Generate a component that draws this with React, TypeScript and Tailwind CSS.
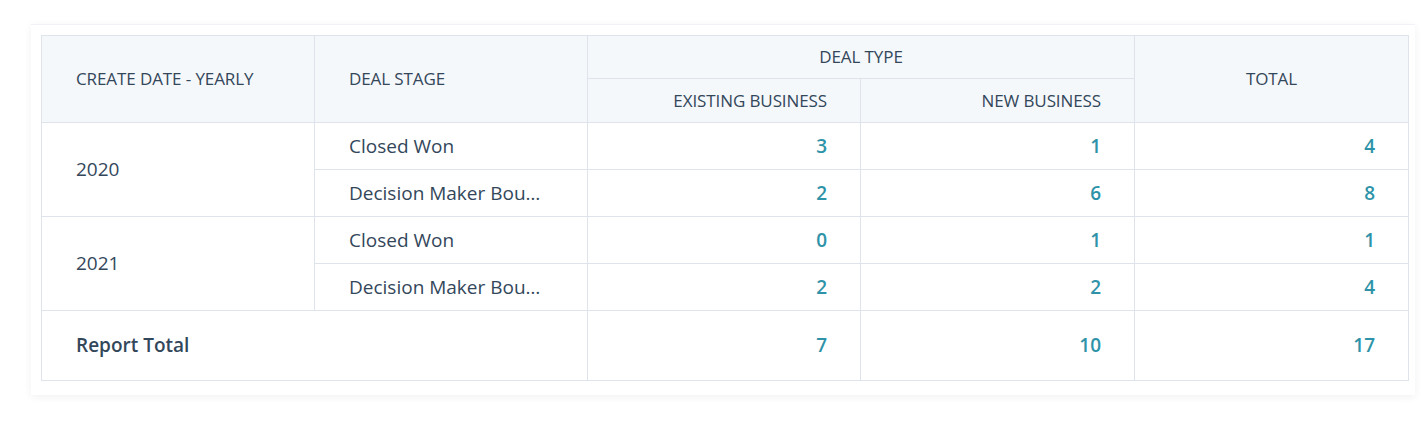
const rows = [
	{ year: "2020", stages: [
		{ stage: "Closed Won", existing: 3, nb: 1, total: 4 },
		{ stage: "Decision Maker Bought-In", existing: 2, nb: 6, total: 8 },
	] },
	{ year: "2021", stages: [
		{ stage: "Closed Won", existing: 0, nb: 1, total: 1 },
		{ stage: "Decision Maker Bought-In", existing: 2, nb: 2, total: 4 },
	] },
];

const th = "border border-[#dfe3eb] bg-[#f5f8fa] font-medium text-[17px] uppercase text-[#33475b] tracking-[-0.1px]";
const td = "border border-[#dfe3eb] text-[19px] text-[#33475b]";
const num = "border border-[#dfe3eb] text-right pr-[33px] text-[19px] font-semibold text-[#2e93a8]";

export default function App() {
	return (
		<div className="w-[1424px] h-[429px] bg-white pt-[24px] pl-[31px]" style={{ fontFamily: "'Open Sans', Lato, sans-serif" }}>
			<div className="w-[1384px] bg-white pt-[10px] pl-[10px] pr-[8px] pb-[14px] shadow-[0_2px_8px_rgba(0,0,0,0.06)] border-t border-[#f0f2f5]">
				<table className="w-[1367px] border-collapse table-fixed">
					<colgroup>
						<col className="w-[273px]" />
						<col className="w-[273px]" />
						<col className="w-[273px]" />
						<col className="w-[274px]" />
						<col className="w-[274px]" />
					</colgroup>
					<thead>
						<tr className="h-[43px]">
							<th rowSpan={2} className={`${th} text-left pl-[34px]`}>Create Date - Yearly</th>
							<th rowSpan={2} className={`${th} text-left pl-[34px]`}>Deal Stage</th>
							<th colSpan={2} className={`${th} text-center`}>Deal Type</th>
							<th rowSpan={2} className={`${th} text-center`}>Total</th>
						</tr>
						<tr className="h-[44px]">
							<th className={`${th} text-right pr-[33px]`}>Existing Business</th>
							<th className={`${th} text-right pr-[33px]`}>New Business</th>
						</tr>
					</thead>
					<tbody>
						{rows.map((group) =>
							group.stages.map((s, i) => (
								<tr key={group.year + i} className="h-[47px]">
									{i === 0 && (
										<td rowSpan={2} className={`${td} pl-[34px]`}>{group.year}</td>
									)}
									<td className={`${td} pl-[34px]`}>
										<div className="w-[198px] truncate">{s.stage}</div>
									</td>
									<td className={num}>{s.existing}</td>
									<td className={num}>{s.nb}</td>
									<td className={num}>{s.total}</td>
								</tr>
							))
						)}
						<tr className="h-[70px]">
							<td colSpan={2} className={`${td} pl-[34px] font-semibold text-[18px]`}>Report Total</td>
							<td className={num}>7</td>
							<td className={num}>10</td>
							<td className={num}>17</td>
						</tr>
					</tbody>
				</table>
			</div>
		</div>
	);
}
